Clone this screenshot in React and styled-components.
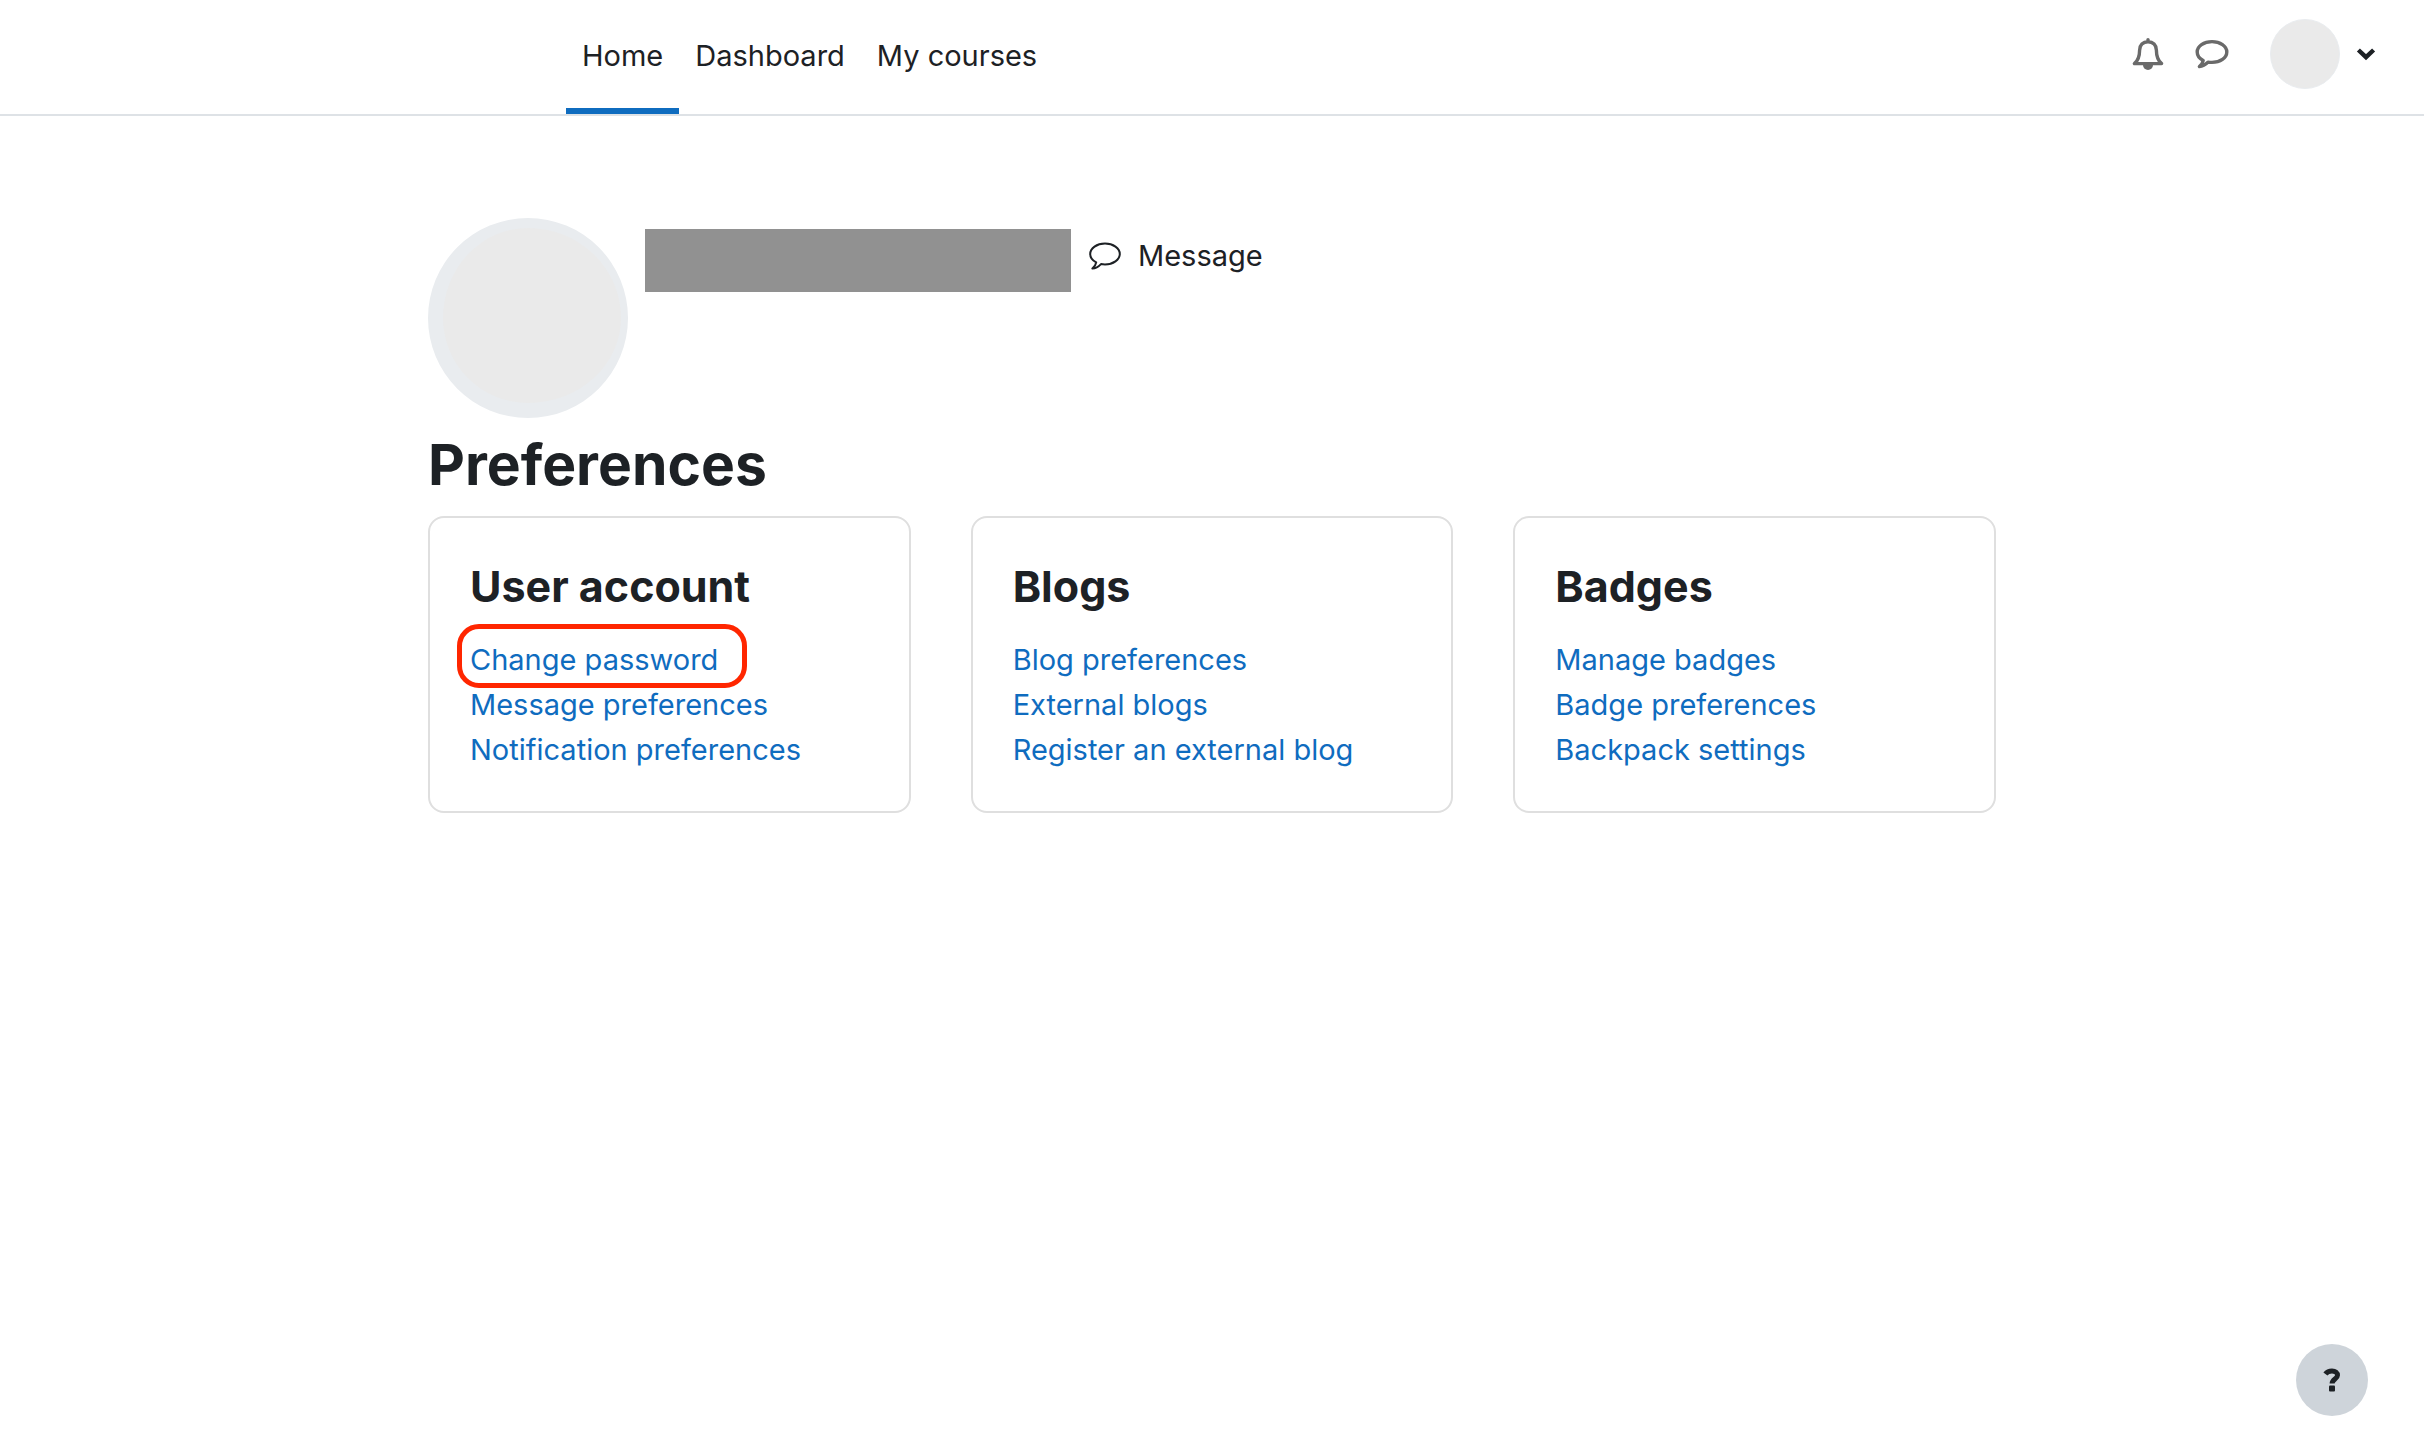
import React from "react";
import styled, { createGlobalStyle } from "styled-components";

const GlobalStyle = createGlobalStyle`
  *, *::before, *::after { box-sizing: border-box; }
  body {
    margin: 0;
    background: #fff;
    color: #1d2125;
    font-family: Inter, "Liberation Sans", sans-serif;
    font-size: 29px;
    line-height: 45px;
  }
  button { font: inherit; color: inherit; background: none; border: 0; padding: 0; cursor: pointer; }
  a { text-decoration: none; }
  svg { display: block; flex: none; }
`;

const Header = styled.header`
  display: flex;
  justify-content: space-between;
  align-items: stretch;
  height: 116px;
  padding: 0 48px 0 566px;
  border-bottom: 2px solid #dee2e6;
`;

const Nav = styled.nav`
  display: flex;
`;

const NavLink = styled.a`
  display: flex;
  align-items: center;
  padding: 2px 16px 0;
  border-bottom: 6px solid ${(p) => (p.$active ? "#0f6cbf" : "transparent")};
  color: #1d2125;
`;

const Tools = styled.div`
  display: flex;
  align-items: center;
  padding-bottom: 6px;
`;

const IconButton = styled.button`
  display: flex;
  align-items: center;
  justify-content: center;
  width: 64px;
  height: 64px;
  color: #6a6a6a;
`;

const UserMenu = styled.button`
  display: flex;
  align-items: center;
  gap: 16px;
  margin-left: 26px;
`;

const SmallAvatar = styled.span`
  width: 70px;
  height: 70px;
  border: 1px solid #e9ecef;
  border-radius: 50%;
  background: #eaeaea;
`;

const Main = styled.main`
  max-width: 1660px;
  margin: 0 auto;
  padding: 102px 46px 0;
`;

const Profile = styled.div`
  display: flex;
  align-items: flex-start;
`;

const Avatar = styled.div`
  width: 200px;
  height: 200px;
  border: solid #e9ecef;
  border-width: 10px 7px 15px 15px;
  border-radius: 50%;
  background: #eaeaea;
`;

const HiddenName = styled.div`
  width: 426px;
  height: 63px;
  margin: 11px 17px 0;
  background: #919191;
`;

const MessageButton = styled.button`
  display: flex;
  align-items: center;
  gap: 16px;
  margin-top: 15px;
`;

const PageTitle = styled.h1`
  margin: 12px 0 16px;
  font-size: 57px;
  line-height: 70px;
  font-weight: 700;
`;

const Cards = styled.div`
  display: grid;
  grid-template-columns: repeat(3, 1fr);
  gap: 60px;
`;

const Card = styled.section`
  padding: 41px 40px 39px;
  border: 2px solid #dfdfdf;
  border-radius: 16px;
`;

const CardTitle = styled.h2`
  margin: 0 0 24px;
  font-size: 43px;
  line-height: 54px;
  font-weight: 700;
`;

const LinkList = styled.ul`
  list-style: none;
  margin: 0;
  padding: 0;
`;

const LinkItem = styled.li`
  position: relative;
`;

const CardLink = styled.a`
  color: #0f6cbf;
`;

const Highlight = styled.span`
  position: absolute;
  top: -13px;
  left: -13px;
  width: 290px;
  height: 64px;
  border: 5px solid #ff2600;
  border-radius: 22px;
  pointer-events: none;
`;

const HelpButton = styled.button`
  position: fixed;
  right: 56px;
  bottom: 28px;
  display: flex;
  align-items: center;
  justify-content: center;
  width: 72px;
  height: 72px;
  border-radius: 50%;
  background: #ced4da;
`;

const BellIcon = () => (
  <svg width="32" height="34" viewBox="0 0 32 34" fill="none" stroke="currentColor" strokeLinecap="round" strokeLinejoin="round" aria-hidden="true">
    <path strokeWidth="3.4" d="M16 4.8c-5 0-8.4 3.2-8.4 8.4 0 6.6-1.6 10.4-5.2 13.4h27.2c-3.6-3-5.2-6.8-5.2-13.4 0-5.2-3.4-8.4-8.4-8.4zM16 2.6v2" />
    <path fill="currentColor" stroke="none" d="M11 28h10a5 5 0 0 1-10 0z" />
  </svg>
);

const CommentIcon = ({ weight }) => (
  <svg width="34" height="30" viewBox="0 0 34 30" fill="none" stroke="currentColor" strokeWidth={weight} strokeLinejoin="round" aria-hidden="true">
    <path d="M17 2.6C8.8 2.6 2.2 7.2 2.2 13c0 3.6 2.4 6.6 6 8.4-.4 2.6-2 4.6-3.8 6.2 3.6-.2 6.4-2.2 8.6-4.5 1.2.2 2.6.3 4 .3 8.2 0 14.8-4.6 14.8-10.4S25.2 2.6 17 2.6z" />
  </svg>
);

const ChevronIcon = () => (
  <svg width="20" height="14" viewBox="0 0 20 14" fill="none" stroke="currentColor" strokeWidth="4.4" aria-hidden="true">
    <path d="M2.4 3 10 10.2 17.6 3" />
  </svg>
);

const QuestionIcon = () => (
  <svg width="18" height="24" viewBox="0 0 18 24" fill="none" stroke="currentColor" strokeWidth="5" aria-hidden="true">
    <path d="M2.4 6C4.2 3.6 6.2 2.9 9 2.9c3.400 0 5.500 1.700 5.500 4.400 0 3.700-5.400 3.900-5.400 8.300" />
    <rect x="6" y="17.600" width="6" height="6" rx="1" fill="currentColor" stroke="none" />
  </svg>
);

const navItems = ["Home", "Dashboard", "My courses"];

const groups = [
  { title: "User account", links: ["Change password", "Message preferences", "Notification preferences"] },
  { title: "Blogs", links: ["Blog preferences", "External blogs", "Register an external blog"] },
  { title: "Badges", links: ["Manage badges", "Badge preferences", "Backpack settings"] },
];

export default function App() {
  return (
    <>
      <GlobalStyle />
      <Header>
        <Nav>
          {navItems.map((item, i) => (
            <NavLink key={item} href="#" $active={i === 0}>{item}</NavLink>
          ))}
        </Nav>
        <Tools>
          <IconButton aria-label="Notifications"><BellIcon /></IconButton>
          <IconButton aria-label="Messages"><CommentIcon weight={3.4} /></IconButton>
          <UserMenu aria-label="User menu">
            <SmallAvatar />
            <ChevronIcon />
          </UserMenu>
        </Tools>
      </Header>
      <Main>
        <Profile>
          <Avatar />
          <HiddenName />
          <MessageButton><CommentIcon weight={2} />Message</MessageButton>
        </Profile>
        <PageTitle>Preferences</PageTitle>
        <Cards>
          {groups.map((group) => (
            <Card key={group.title}>
              <CardTitle>{group.title}</CardTitle>
              <LinkList>
                {group.links.map((link) => (
                  <LinkItem key={link}>
                    <CardLink href="#">{link}</CardLink>
                    {link === "Change password" && <Highlight />}
                  </LinkItem>
                ))}
              </LinkList>
            </Card>
          ))}
        </Cards>
      </Main>
      <HelpButton aria-label="Help"><QuestionIcon /></HelpButton>
    </>
  );
}
